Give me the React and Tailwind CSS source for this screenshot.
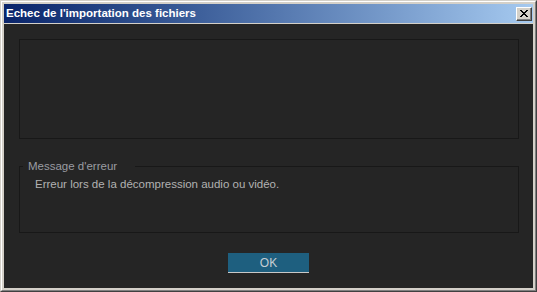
export default function App() {
  const font = { fontFamily: '"Liberation Sans", Arial, sans-serif' };
  return (
    <div
      className="w-[537px] h-[292px] border border-t-[#d4d0c8] border-l-[#d4d0c8] border-r-[#404040] border-b-[#404040]"
      style={font}
    >
      <div className="w-full h-full border border-t-white border-l-white border-r-[#808080] border-b-[#808080] bg-[#d4d0c8] p-[2px] flex flex-col">
        <div className="h-[19px] flex items-center justify-between pl-[2px] pr-[1px] bg-gradient-to-r from-[#0a246a] to-[#a6caf0]">
          <span className="text-white font-bold text-[11.5px] leading-[19px]" style={font}>
            Echec de l'importation des fichiers
          </span>
          <button className="w-[16px] h-[14px] bg-[#d4d0c8] border border-t-white border-l-white border-r-[#404040] border-b-[#404040] flex items-center justify-center shadow-[inset_-1px_-1px_0_#808080]">
            <svg width="8" height="7" viewBox="0 0 8 7" shapeRendering="crispEdges">
              <path
                fill="#000"
                d="M0 0h2v1h1v1h2V1h1V0h2v1H7v1H6v1H5v1h1v1h1v1h1v1H6V6H5V5H3v1H2v1H0V6h1V5h1V4h1V3H2V2H1V1H0z"
              />
            </svg>
          </button>
        </div>
        <div className="mt-[1px] flex-1 bg-[#252525] flex flex-col px-[15px] pt-[15px]">
          <div className="w-[500px] h-[100px] border border-[#181818]" />
          <fieldset className="mt-[20px] w-[500px] border border-[#181818] pb-[41px]">
            <legend className="ml-[3px] pl-[5px] pr-[18px] text-[11.5px] leading-[14px] text-[#9a9ca2]" style={font}>
              Message d'erreur
            </legend>
            <div className="pl-[15px] pt-[4px] text-[11.5px] leading-[14px] text-[#b2b2b2]" style={font}>
              Erreur lors de la décompression audio ou vidéo.
            </div>
          </fieldset>
          <button
            className="mt-[20px] self-center w-[81px] h-[20px] bg-[#1e5f7f] border-b border-[#c8c8c8] text-[12px] text-[#c5cdd2] flex items-center justify-center"
            style={font}
          >
            OK
          </button>
        </div>
      </div>
    </div>
  );
}
